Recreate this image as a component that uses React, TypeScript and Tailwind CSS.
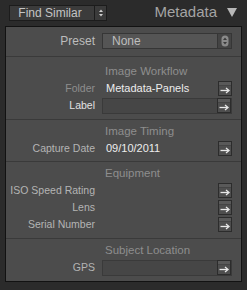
import React from 'react';

const Stepper = ({ light }: { light?: boolean }) => (
    <svg width="8" height="12" viewBox="0 0 8 12">
        <rect x="0.5" y="0.5" width="7" height="11" rx="3.5" fill={light ? '#3a3a3a' : '#8a8a8a'} />
        <path d="M2 5 L4 2.5 L6 5 Z" fill={light ? '#d0d0d0' : '#3a3a3a'} />
        <path d="M2 7 L4 9.5 L6 7 Z" fill={light ? '#d0d0d0' : '#3a3a3a'} />
    </svg>
);

const ArrowButton = () => (
    <div className="w-[14px] h-[15px] border border-[#2c2c2c] bg-[#4e4e4e] flex flex-col shrink-0">
        <div className="h-[4px] bg-[#595959] border-b border-[#444]" />
        <svg width="12" height="9" viewBox="0 0 12 9">
            <path d="M1.5 4.5 H9" stroke="#e8e8e8" strokeWidth="1.3" />
            <path d="M7 2 L10 4.5 L7 7" stroke="#e8e8e8" strokeWidth="1.3" fill="none" />
        </svg>
    </div>
);

type RowProps = {
    label: string;
    value?: string;
    labelColor?: string;
    field?: boolean;
    arrow?: boolean;
};

const Row = ({ label, value, labelColor = 'text-[#b4b4b4]', field, arrow = true }: RowProps) => (
    <div className="flex items-center h-[17px]">
        <div className={`w-[89px] text-right text-[10.5px] whitespace-nowrap ${labelColor}`}>{label}</div>
        <div className="ml-[7px] w-[130px] h-[17px] flex items-center">
            {field ? (
                <div className="flex-1 h-[16px] border border-[#3a3a3a] bg-[#464646] flex items-center justify-end">
                    <ArrowButton />
                </div>
            ) : (
                <>
                    <div className="flex-1 pl-[4px] text-[#ececec] whitespace-nowrap">{value}</div>
                    {arrow && <ArrowButton />}
                </>
            )}
        </div>
    </div>
);

const Header = ({ text }: { text: string }) => (
    <div className="h-[17px] flex items-center pl-[99px] text-[#8e8e8e] text-[11.5px]">{text}</div>
);

export default function App() {
    return (
        <div
            className="w-[247px] h-[290px] bg-[#2b2b2b] overflow-hidden text-[11px]"
            style={{ fontFamily: '"Liberation Sans", Arial, sans-serif' }}
        >
            {/* Barra superior */}
            <div className="h-[26px] flex items-center pl-[9px] pr-[10px]">
                <div className="w-[98px] h-[16px] border border-[#1c1c1c] bg-[#3b3b3b] flex -mt-[1px]">
                    <div className="w-[84px] flex items-center justify-center text-[#c4c4c4] text-[12px] pr-[4px]">Find Similar</div>
                    <div className="flex-1 border-l border-[#1c1c1c] flex items-center justify-center">
                        <Stepper light />
                    </div>
                </div>
                <div className="ml-auto flex items-center gap-[10px] -mt-[2px]">
                    <span className="text-[15px] text-[#a4a4a4]">Metadata</span>
                    <svg width="10" height="9" viewBox="0 0 10 9">
                        <path d="M0 0 H10 L5 9 Z" fill="#b8b8b8" />
                    </svg>
                </div>
            </div>

            {/* Panel */}
            <div className="ml-[5px] w-[237px] border border-[#121212] bg-[#4c4c4c]">
                <div className="h-[30px] pt-[6px] border-b border-[#3a3a3a]">
                    <div className="flex items-center h-[16px]">
                        <div className="w-[89px] text-right text-[#bcbcbc] text-[12px]">Preset</div>
                        <div className="ml-[7px] w-[130px] h-[16px] border border-[#363636] bg-[#555] flex">
                            <div className="flex-1 pl-[9px] flex items-center text-[#bdbdbd] text-[12px]">None</div>
                            <div className="w-[14px] border-l border-[#363636] bg-[#444] flex items-center justify-center">
                                <Stepper />
                            </div>
                        </div>
                    </div>
                </div>

                <div className="pt-[6px] pb-[5px] border-b border-[#3a3a3a]">
                    <Header text="Image Workflow" />
                    <Row label="Folder" value="Metadata-Panels" labelColor="text-[#8e8e8e]" />
                    <Row label="Label" field labelColor="text-[#e2e2e2]" />
                </div>

                <div className="pt-[3px] pb-[4px] border-b border-[#3a3a3a]">
                    <Header text="Image Timing" />
                    <Row label="Capture Date" value="09/10/2011" />
                </div>

                <div className="pt-[3px] pb-[5px] border-b border-[#3a3a3a]">
                    <Header text="Equipment" />
                    <Row label="ISO Speed Rating" />
                    <Row label="Lens" />
                    <Row label="Serial Number" />
                </div>

                <div className="pt-[3px] pb-[5px]">
                    <Header text="Subject Location" />
                    <Row label="GPS" field />
                </div>
            </div>
        </div>
    );
}
